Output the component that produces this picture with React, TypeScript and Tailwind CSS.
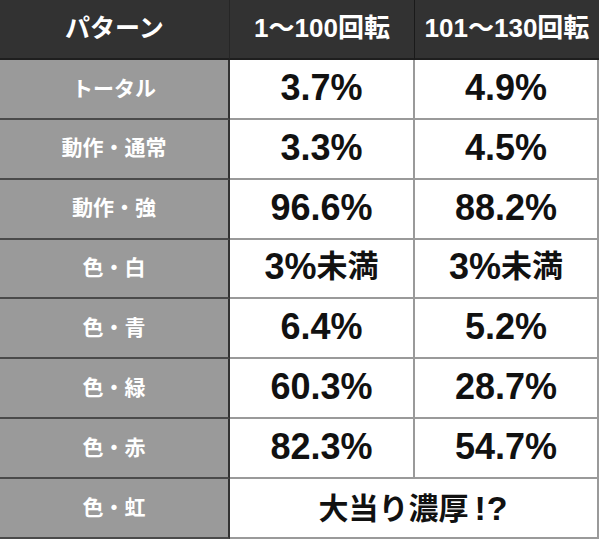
import React from "react";

const rows: { label: string; a: React.ReactNode; b?: React.ReactNode; span?: boolean }[] = [
  { label: "トータル", a: "3.7%", b: "4.9%" },
  { label: "動作・通常", a: "3.3%", b: "4.5%" },
  { label: "動作・強", a: "96.6%", b: "88.2%" },
  {
    label: "色・白",
    a: (
      <>
        3%<span className="text-[31px]">未満</span>
      </>
    ),
    b: (
      <>
        3%<span className="text-[31px]">未満</span>
      </>
    ),
  },
  { label: "色・青", a: "6.4%", b: "5.2%" },
  { label: "色・緑", a: "60.3%", b: "28.7%" },
  { label: "色・赤", a: "82.3%", b: "54.7%" },
  { label: "色・虹", a: "", span: true },
];

const font = "font-['Liberation_Sans','Noto_Sans_CJK_JP',sans-serif]";

export default function App() {
  return (
    <div className={`w-[600px] h-[540px] bg-white ${font}`}>
      <div className="grid w-[599px] h-[539px] grid-cols-[230px_185px_184px] grid-rows-[repeat(9,minmax(0,1fr))]">
        <div className="flex items-center justify-center bg-[#323232] border-b-2 border-r border-b-[#1e1e1e] border-r-[#262626] text-white font-bold text-[25px]">
          パターン
        </div>
        <div className="flex items-center justify-center bg-[#323232] border-b-2 border-r border-b-[#1e1e1e] border-r-[#1a1a1a] text-white font-bold text-[26px]">
          1～100回転
        </div>
        <div className="flex items-center justify-center bg-[#323232] border-b-2 border-b-[#1e1e1e] text-white font-bold text-[26px]">
          101～130回転
        </div>
        {rows.map((r, i) => (
          <React.Fragment key={i}>
            <div className="flex items-center justify-center bg-[#9a9a9a] border-b-2 border-r-2 border-b-[#4a4a4a] border-r-[#333333] text-white font-bold text-[21px] pb-[1px]">
              {r.label}
            </div>
            {r.span ? (
              <div className="col-span-2 flex items-center justify-center bg-white border-b-2 border-r-2 border-[#9a9a9a] text-[#111] font-bold text-[30px]">
                大当り濃厚<span className="text-[34px] ml-[6px] tracking-[1px]">!?</span>
              </div>
            ) : (
              <>
                <div className="flex items-center justify-center bg-white border-b-2 border-r-2 border-[#9a9a9a] text-[#111] font-bold text-[36px] pb-[2px]">
                  {r.a}
                </div>
                <div className="flex items-center justify-center bg-white border-b-2 border-r-2 border-[#9a9a9a] text-[#111] font-bold text-[36px] pb-[2px]">
                  {r.b}
                </div>
              </>
            )}
          </React.Fragment>
        ))}
      </div>
    </div>
  );
}
